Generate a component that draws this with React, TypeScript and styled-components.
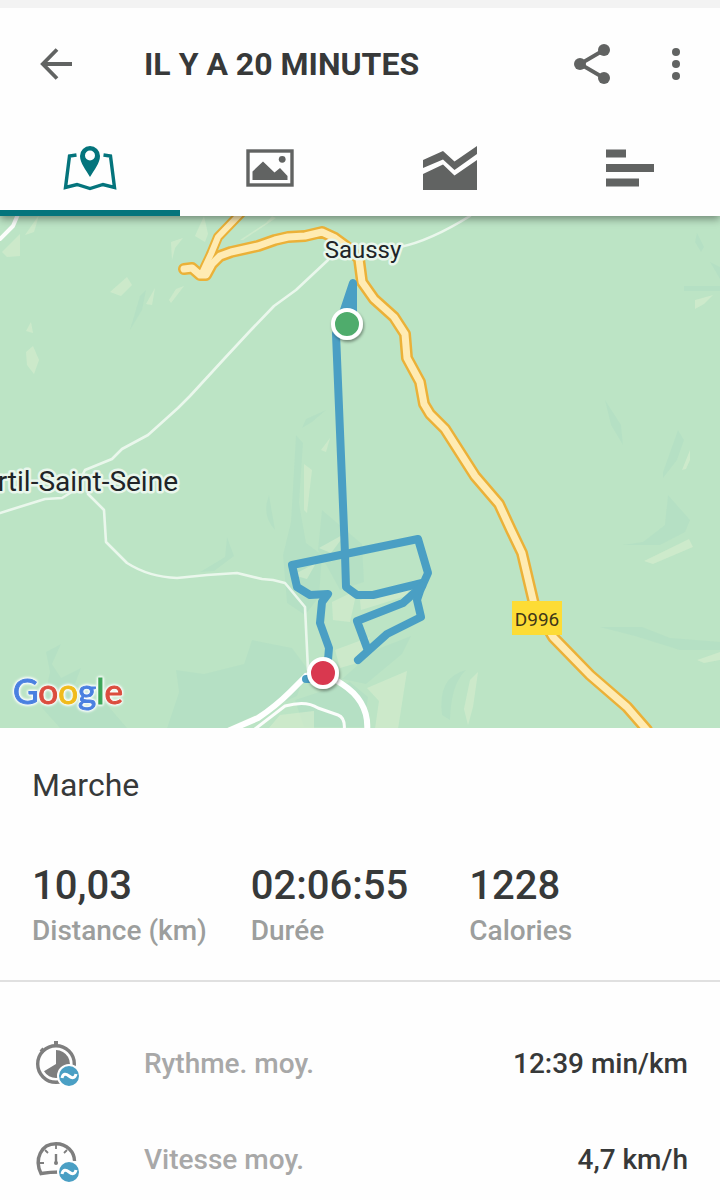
import React from "react";
import styled, { createGlobalStyle } from "styled-components";

const GlobalStyle = createGlobalStyle`
  * { box-sizing: border-box; }
  body {
    margin: 0;
    background: #fefefe;
    color: #373939;
    font-family: Roboto, "Liberation Sans", sans-serif;
  }
`;

const Screen = styled.main`
  border-top: 8px solid #f3f3f3;
`;

const TopPanel = styled.div`
  position: relative;
  z-index: 1;
  background: #fefefe;
  box-shadow: 0 3px 8px rgba(0, 0, 0, 0.4);
  clip-path: inset(0 0 -16px 0);
`;

const AppBar = styled.header`
  display: flex;
  align-items: center;
  gap: 12px;
  height: 112px;
  padding: 0 8px 0 20px;
`;

const IconButton = styled.button`
  display: flex;
  align-items: center;
  justify-content: center;
  width: 72px;
  height: 72px;
  padding: 0;
  border: 0;
  background: none;
  color: #616362;
`;

const Title = styled.h1`
  flex: 1;
  margin: 0 0 0 40px;
  font-size: 32px;
  line-height: 40px;
  font-weight: 700;
`;

const Tabs = styled.nav`
  display: grid;
  grid-template-columns: repeat(4, 1fr);
`;

const Tab = styled.button<{ $active?: boolean }>`
  display: flex;
  align-items: center;
  justify-content: center;
  height: 96px;
  padding: 0;
  border: 0;
  background: none;
  color: ${(p) => (p.$active ? "#04747c" : "#616362")};
  box-shadow: ${(p) => (p.$active ? "inset 0 -6px #04747c" : "none")};
`;

const MapView = styled.svg`
  display: block;
  width: 100%;
  height: 512px;
  background: #bce4c5;
`;

const MapLabel = styled.text`
  fill: #202427;
  stroke: #e9f6ec;
  stroke-width: 5px;
  stroke-linejoin: round;
  paint-order: stroke;
`;

const Wordmark = styled.text`
  font-family: Lato, sans-serif;
  font-size: 35px;
  font-weight: 400;
  filter: drop-shadow(0 0 1px #fff) drop-shadow(0 0 1px #fff) drop-shadow(0 0 1px #eef8f4);
`;

const Letter = styled.tspan<{ $color: string }>`
  fill: ${(p) => p.$color};
  stroke: ${(p) => p.$color};
  stroke-width: 1px;
`;

const Summary = styled.section`
  padding: 36px 32px 28px;
  border-bottom: 2px solid #e0e0e0;
`;

const Activity = styled.h2`
  margin: 0 0 56px;
  font-size: 32px;
  line-height: 42px;
  font-weight: 400;
`;

const Stats = styled.dl`
  display: grid;
  grid-template-columns: repeat(3, 1fr);
  margin: 0;
`;

const Stat = styled.div`
  display: flex;
  flex-direction: column-reverse;
  white-space: nowrap;
`;

const StatValue = styled.dd`
  margin: 0;
  font-size: 40px;
  line-height: 48px;
  font-weight: 500;
`;

const StatLabel = styled.dt`
  font-size: 28px;
  line-height: 42px;
  font-weight: 500;
  color: #9c9e9d;
`;

const Metrics = styled.dl`
  display: flex;
  flex-direction: column;
  gap: 32px;
  margin: 0;
  padding: 50px 32px 4px;
`;

const Metric = styled.div`
  display: flex;
  align-items: center;
  height: 64px;
  font-size: 28px;
  line-height: 36px;
  font-weight: 500;
`;

const MetricLabel = styled.dt`
  flex: 1;
  margin-left: 64px;
  color: #a8a8a8;
`;

const MetricValue = styled.dd`
  margin: 0;
`;

const ApproxBadge = () => (
  <g>
    <circle cx="37" cy="36" r="11" fill="#4a9fc4" stroke="#fefefe" strokeWidth="2" />
    <path d="M30 38C31 33 34 33.5 37 36S43 38.5 44 34" fill="none" stroke="#fff" strokeWidth="3" />
  </g>
);

const StopwatchIcon = () => (
  <svg width="48" height="48" viewBox="0 0 48 48" aria-hidden="true">
    <circle cx="24" cy="24" r="18.3" fill="none" stroke="#7e7e7e" strokeWidth="3.4" />
    <path d="M24 1v5M9 9l3 3" stroke="#7e7e7e" strokeWidth="4" />
    <path d="M24 24V10A14 14 0 1 1 12 31.3Z" fill="#7e7e7e" />
    <ApproxBadge />
  </svg>
);

const GaugeIcon = () => (
  <svg width="48" height="48" viewBox="0 0 48 48" aria-hidden="true">
    <path d="M28 36Q18 36 9 37.5C2 23 9 7.8 24 7.8C35 7.8 42.4 16 42.5 25" fill="none" stroke="#7e7e7e" strokeWidth="3.4" />
    <path d="M24 8v5M13 14l3 3M35 14l-3 3M7 27h5" stroke="#7e7e7e" strokeWidth="1.8" />
    <path d="M24 18v9" stroke="#7e7e7e" strokeWidth="2.4" />
    <circle cx="24" cy="27" r="2" fill="#7e7e7e" />
    <ApproxBadge />
  </svg>
);

const ROAD =
  "M184 269L192 268L200 275L206 275L212 264L220 256L231 252L258 246L275 240L288 237L305 236L322 232L335 238L350 249L359 259L362 282L374 299L394 317L405 334L407 358L420 382L424 404L430 414L445 429L475 476L499 504L511 530L522 553L534 604L553 637L590 675L627 707L647 730";
const ROAD_SPUR = "M242 212L218 237L211 254L203 271";

const LANES = [
  "M328 260L296 290L274 306L250 331L224 359L190 396L178 408L148 435L122 449L112 459L85 470L75 490L62 498L45 499L0 513",
  "M88 494L104 510L106 542L127 563Q149 577 177 578L207 575L237 573L262 579L273 580L285 583L305 607L308 670",
  "M400 247Q430 241 470 216",
];

const TRACKS = [
  "M336 334L345 554L346 587L357 595L373 595L422 583",
  "M328 660L329 648L320 623L322 602L328 594L310 595L297 587L292 565L418 539L428 573L420 591L417 600L421 617L387 634L358 660",
  "M422 586L403 603L357 621L367 648",
];

const Terrain = () => (
  <>
    <g fill="#aedcc3" opacity="0.45">
      <path d="M296 435l7 8-4 60 7 40 16 12-3 42-14 18-18-12-4-48 8-33z" />
      <path d="M130 330l10-34 6-6-4 20zM268 498q-6 18 7 32l-6-35z" />
      <path d="M252 640l40 8 15 20-10 28-70 32h-60l12-36-3-22 28 4 40-10z" />
      <path d="M46 652l15-8-9 20 9 14 20-10-6 16 28 16 24 28H60l-18-20 8-36z" />
      <path d="M200 572l25-15 2-20 7 19-20 15z" />
      <path d="M605 400l16 25 2 20-12-20zM663 472l15-42 6 10-7 20-14 18z" />
      <path d="M668 495l22 25-5 12-25 13-37 0 20-3 22-17zM600 627h42l28 11 50 4v8h-40l-45-14z" />
      <path d="M697 233l7 14-3 5-6-10zM684 286h36v5h-36zM710 262l10 5v12z" />
      <path d="M375 650l36-14-9 18-36 30-24-5zM442 715q-5-38 24-45-15 14-16 50z" />
      <path d="M306 419l20-9-14 12-10 6zM295 700l55-18 18 15-4 30h-60z" />
      <path d="M322 510l40 34 2 38-24 8-22-40z" />
    </g>
    <g fill="#d5edce" opacity="0.65">
      <path d="M2 252l18-18v22L7 257zM25 235l14-20-5 17zM110 292l17-15 5 8-11 11zM171 242l12-4-8 10-3 12zM146 304l9-16-3 17zM169 300l7-11 8-3-13 17z" />
      <path d="M26 352l7-6 6 14-5 14-7-9zM26 331l5-9 2 11zM195 236l9-20 4 18-3 8zM240 240l26-17 6-7 4 2-33 22z" />
      <path d="M304 464l8 6-3 25-2 18-3-3zM321 450l9-12-4 14zM319 548l27-15-15 20zM293 575l23-12-9 16zM332 602l25-12-7 32-17-2z" />
      <path d="M335 650l35-13-13 26-17 5zM367 688l40-17-9 58h-23l4-28zM470 680l8-8-5 35-5 18-4-16z" />
      <path d="M280 715l34-4v17h-45zM644 561l45-22 4 8-40 17zM682 470l8-20v10l-4 9zM697 660l23-8v8l-16 3zM695 300l18-5-9 9-9 5zM360 600l55-20-9 16-45 14z" />
    </g>
  </>
);

const RouteMap = () => (
  <MapView viewBox="0 216 720 512" preserveAspectRatio="xMidYMid slice" role="img" aria-label="Carte du parcours">
    <defs>
      <filter id="pinShadow" x="-50%" y="-50%" width="200%" height="200%">
        <feDropShadow dx="1" dy="2" stdDeviation="1.5" floodOpacity="0.4" />
      </filter>
    </defs>
    <Terrain />
    <g fill="none" strokeLinejoin="round" strokeLinecap="round">
      <g stroke="#eaf7ec" strokeWidth="2.6">
        {LANES.map((d) => (
          <path key={d} d={d} />
        ))}
        <path d="M0 239L13 226L19 212" stroke="#fbfdfb" strokeWidth="4" />
        <path d="M255 729L285 706Q306 700 318 708L338 715Q346 718 344 732" stroke="#fbfdfb" strokeWidth="3" />
        <path d="M228 731L258 718Q276 706 290 692L306 676L323 672L342 684Q370 702 367 732" stroke="#fff" strokeWidth="6" />
      </g>
      <g stroke="#ebb138" strokeWidth="12">
        <path d={ROAD_SPUR} strokeWidth="10" />
        <path d={ROAD} />
      </g>
      <g stroke="#ffebb3" strokeWidth="7">
        <path d={ROAD_SPUR} strokeWidth="6" />
        <path d={ROAD} />
      </g>
      <g stroke="#4a9fc4" strokeWidth="8">
        <path d="M353 283V315L340 322Z" fill="#4a9fc4" />
        {TRACKS.map((d) => (
          <path key={d} d={d} />
        ))}
        <path d="M306 679H318" />
      </g>
    </g>
    <g filter="url(#pinShadow)" stroke="#fff" strokeWidth="4">
      <circle cx="347" cy="324" r="14" fill="#4fac6c" />
      <circle cx="323" cy="673" r="14" fill="#d93850" />
    </g>
    <rect x="512" y="601" width="50" height="34" fill="#fddc35" />
    <text x="537" y="626" textAnchor="middle" fontSize="19" fill="#3f3718">D996</text>
    <MapLabel x="363" y="258" textAnchor="middle" fontSize="24">Saussy</MapLabel>
    <MapLabel x="178" y="491" textAnchor="end" fontSize="28">rtil-Saint-Seine</MapLabel>
    <Wordmark x="13" y="704">
      <Letter $color="#4a80e0">G</Letter>
      <Letter $color="#db4d3f">o</Letter>
      <Letter $color="#f0bb1c">o</Letter>
      <Letter $color="#4a80e0">g</Letter>
      <Letter $color="#3da557">l</Letter>
      <Letter $color="#db4d3f">e</Letter>
    </Wordmark>
  </MapView>
);

const STATS = [
  { label: "Distance (km)", value: "10,03" },
  { label: "Durée", value: "02:06:55" },
  { label: "Calories", value: "1228" },
];

const METRICS = [
  { label: "Rythme. moy.", value: "12:39 min/km", Icon: StopwatchIcon },
  { label: "Vitesse moy.", value: "4,7 km/h", Icon: GaugeIcon },
];

export default function App() {
  return (
    <>
      <GlobalStyle />
      <Screen>
        <TopPanel>
          <AppBar>
            <IconButton aria-label="Retour">
              <svg width="32" height="32" viewBox="0 0 32 32" fill="none" stroke="currentColor" strokeWidth="3.8">
                <path d="M17 1.5L2.8 16L17 30.5M3 16H32" />
              </svg>
            </IconButton>
            <Title>IL Y A 20 MINUTES</Title>
            <IconButton aria-label="Partager">
              <svg width="36" height="40" viewBox="0 0 36 40" fill="currentColor">
                <path d="M30 6L6 20L30 34" fill="none" stroke="currentColor" strokeWidth="3.8" />
                <circle cx="30" cy="6" r="6" />
                <circle cx="6" cy="20" r="6" />
                <circle cx="30" cy="34" r="6" />
              </svg>
            </IconButton>
            <IconButton aria-label="Plus d’options">
              <svg width="8" height="32" viewBox="0 0 8 32" fill="currentColor">
                <circle cx="4" cy="4" r="4" />
                <circle cx="4" cy="16" r="4" />
                <circle cx="4" cy="28" r="4" />
              </svg>
            </IconButton>
          </AppBar>
          <Tabs>
            <Tab $active aria-label="Carte">
              <svg width="64" height="48" viewBox="0 0 64 48">
                <path d="M18.5 11L11.5 12L7.5 43.5L19 40.5L32 44.5L45 40.5L56.5 43.5L52.5 12L45.5 11" fill="none" stroke="currentColor" strokeWidth="3.4" />
                <path fillRule="evenodd" fill="currentColor" d="M32 33C28 26 22 19 22 12A10 10 0 0 1 42 12C42 19 36 26 32 33ZM32 6.5A5 5 0 1 0 32 16.5A5 5 0 1 0 32 6.5Z" />
              </svg>
            </Tab>
            <Tab aria-label="Photos">
              <svg width="64" height="48" viewBox="0 0 64 48">
                <rect x="10" y="7" width="44" height="34" fill="none" stroke="currentColor" strokeWidth="3.4" />
                <path d="M14.5 36V27.5L25 17.5L36.5 28.5L42 24L49.5 32V36Z" fill="currentColor" />
                <circle cx="44.2" cy="15.3" r="3.4" fill="currentColor" />
              </svg>
            </Tab>
            <Tab aria-label="Graphiques">
              <svg width="64" height="48" viewBox="0 0 64 48" fill="currentColor">
                <path d="M5 16L25 7L36.5 17.5L59 2V10L36.5 26L25 15.5L5 24Z" />
                <path d="M5 30L25 20.5L36.5 31.5L59 16V46H5Z" />
              </svg>
            </Tab>
            <Tab aria-label="Tours">
              <svg width="64" height="48" viewBox="0 0 64 48" fill="currentColor">
                <path d="M8 5.5h20v8H8zM8 20h48v8H8zM8 34.5h33v8H8z" />
              </svg>
            </Tab>
          </Tabs>
        </TopPanel>
        <RouteMap />
        <Summary>
          <Activity>Marche</Activity>
          <Stats>
            {STATS.map((s) => (
              <Stat key={s.label}>
                <StatLabel>{s.label}</StatLabel>
                <StatValue>{s.value}</StatValue>
              </Stat>
            ))}
          </Stats>
        </Summary>
        <Metrics>
          {METRICS.map(({ label, value, Icon }) => (
            <Metric key={label}>
              <Icon />
              <MetricLabel>{label}</MetricLabel>
              <MetricValue>{value}</MetricValue>
            </Metric>
          ))}
        </Metrics>
      </Screen>
    </>
  );
}
